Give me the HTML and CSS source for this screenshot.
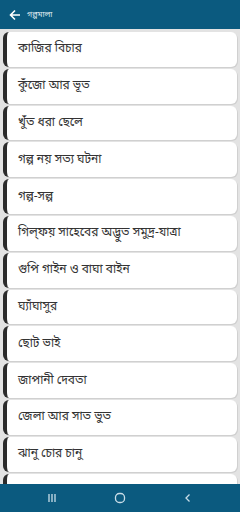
FILE: index.html
```html
<!DOCTYPE html>
<html lang="bn">
<head>
<meta charset="utf-8">
<link rel="stylesheet" href="styles.css">
</head>
<body>
<div class="app">
  <header class="appbar">
    <svg class="back" width="12" height="12" viewBox="0 0 12 12"><path d="M11 6H1.8M6 1.5L1.5 6 6 10.5" fill="none" stroke="#fff" stroke-width="1.6"/></svg>
    <span class="title">গল্পমালা</span>
  </header>
  <main class="list">
    <div class="card">কাজির বিচার</div>
    <div class="card">কুঁজো আর ভূত</div>
    <div class="card">খুঁত ধরা ছেলে</div>
    <div class="card">গল্প নয় সত্য ঘটনা</div>
    <div class="card">গল্প-সল্প</div>
    <div class="card">গিল্‌ফয় সাহেবের অদ্ভুত সমুদ্র-যাত্রা</div>
    <div class="card">গুপি গাইন ও বাঘা বাইন</div>
    <div class="card">ঘ্যাঁঘাসুর</div>
    <div class="card">ছোট ভাই</div>
    <div class="card">জাপানী দেবতা</div>
    <div class="card">জেলা আর সাত ভুত</div>
    <div class="card">ঝানু চোর চানু</div>
    <div class="card"></div>
  </main>
  <nav class="navbar">
    <svg width="10" height="10" viewBox="0 0 10 10"><path d="M2 1v8M5 1v8M8 1v8" stroke="#c9dde8" stroke-width="1.3"/></svg>
    <svg width="12" height="12" viewBox="0 0 12 12"><rect x="1.5" y="1.5" width="9" height="9" rx="3.8" fill="none" stroke="#c9dde8" stroke-width="1.3"/></svg>
    <svg width="10" height="10" viewBox="0 0 10 10"><path d="M6.5 1.5L3 5l3.5 3.5" fill="none" stroke="#c9dde8" stroke-width="1.3"/></svg>
  </nav>
</div>
</body>
</html>
```
FILE: styles.css
```css
* { box-sizing: border-box; }
html, body { margin: 0; padding: 0; }
body {
  width: 240px;
  height: 512px;
  overflow: hidden;
  background: #e3e3e3;
  font-family: "Noto Sans Bengali", "Noto Sans", "DejaVu Sans", sans-serif;
}
.app {
  height: 512px;
  display: flex;
  flex-direction: column;
}
.appbar {
  flex: 0 0 29px;
  background: #0b5a7f;
  display: flex;
  align-items: center;
  padding-left: 9px;
  gap: 6px;
}
.title {
  color: #dfe9ef;
  font-size: 8px;
  line-height: 1;
}
.list {
  flex: 1;
  overflow: hidden;
  padding: 3px 3px 0 3px;
  display: flex;
  flex-direction: column;
  gap: 2px;
}
.card {
  flex: 0 0 34.8px;
  background: #fff;
  border-left: 4px solid #2b2b2b;
  border-radius: 6px;
  box-shadow: 1px 1px 0 #d0d0d0;
  display: flex;
  align-items: center;
  padding-left: 11px;
  font-size: 12px;
  color: #333;
  white-space: nowrap;
}
.navbar {
  flex: 0 0 28px;
  background: #0b5a7f;
  display: flex;
  align-items: center;
  justify-content: space-between;
  padding: 0 47px;
}
```
